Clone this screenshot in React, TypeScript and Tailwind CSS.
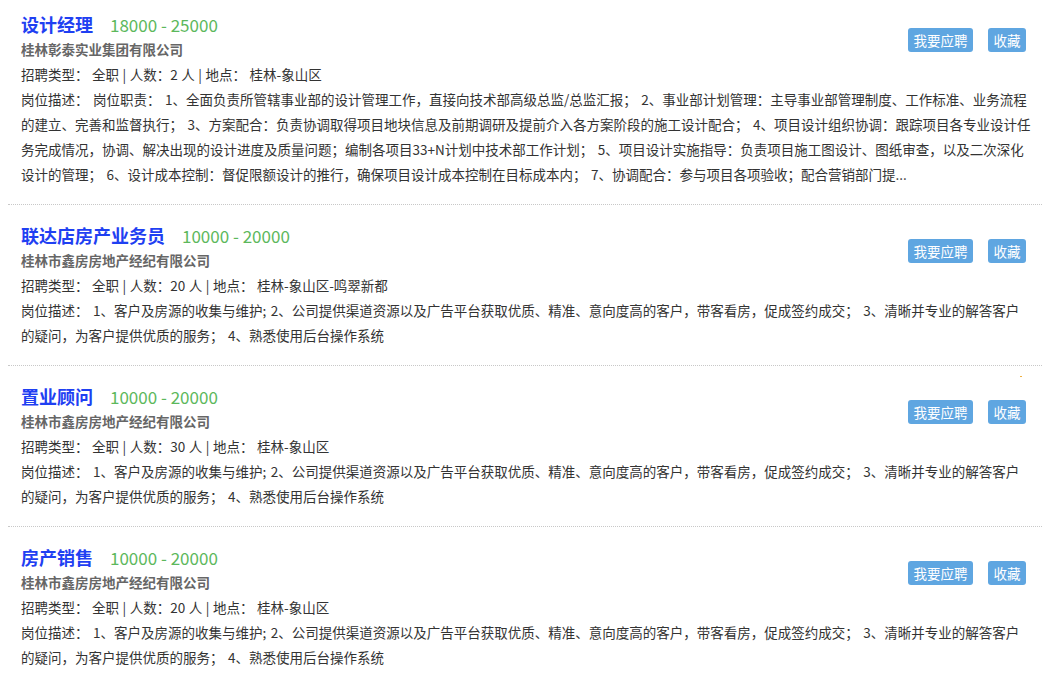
import React from "react";

type Job = {
  title: string;
  salary: string;
  company: string;
  count: string;
  place: string;
  desc: string;
};

const jobs: Job[] = [
  {
    title: "设计经理",
    salary: "18000 - 25000",
    company: "桂林彰泰实业集团有限公司",
    count: "2",
    place: "桂林-象山区",
    desc: "岗位职责： 1、全面负责所管辖事业部的设计管理工作，直接向技术部高级总监/总监汇报； 2、事业部计划管理：主导事业部管理制度、工作标准、业务流程的建立、完善和监督执行； 3、方案配合：负责协调取得项目地块信息及前期调研及提前介入各方案阶段的施工设计配合； 4、项目设计组织协调：跟踪项目各专业设计任务完成情况，协调、解决出现的设计进度及质量问题；编制各项目33+N计划中技术部工作计划； 5、项目设计实施指导：负责项目施工图设计、图纸审查，以及二次深化设计的管理； 6、设计成本控制：督促限额设计的推行，确保项目设计成本控制在目标成本内； 7、协调配合：参与项目各项验收；配合营销部门提...",
  },
  {
    title: "联达店房产业务员",
    salary: "10000 - 20000",
    company: "桂林市鑫房房地产经纪有限公司",
    count: "20",
    place: "桂林-象山区-鸣翠新都",
    desc: "1、客户及房源的收集与维护; 2、公司提供渠道资源以及广告平台获取优质、精准、意向度高的客户，带客看房，促成签约成交； 3、清晰并专业的解答客户的疑问，为客户提供优质的服务； 4、熟悉使用后台操作系统",
  },
  {
    title: "置业顾问",
    salary: "10000 - 20000",
    company: "桂林市鑫房房地产经纪有限公司",
    count: "30",
    place: "桂林-象山区",
    desc: "1、客户及房源的收集与维护; 2、公司提供渠道资源以及广告平台获取优质、精准、意向度高的客户，带客看房，促成签约成交； 3、清晰并专业的解答客户的疑问，为客户提供优质的服务； 4、熟悉使用后台操作系统",
  },
  {
    title: "房产销售",
    salary: "10000 - 20000",
    company: "桂林市鑫房房地产经纪有限公司",
    count: "20",
    place: "桂林-象山区",
    desc: "1、客户及房源的收集与维护; 2、公司提供渠道资源以及广告平台获取优质、精准、意向度高的客户，带客看房，促成签约成交； 3、清晰并专业的解答客户的疑问，为客户提供优质的服务； 4、熟悉使用后台操作系统",
  },
];

function JobItem({ job }: { job: Job }) {
  return (
    <div className="border-b border-dotted border-[#c8c8c8] pl-[13px] pr-[11px] pt-[18px] pb-[17px] [word-spacing:1.5px] first:pt-[12px] last:border-b-0">
      <div className="flex items-start justify-between">
        <div>
          <div className="flex h-[25px] items-baseline leading-[25px]">
            <span className="text-[18px] font-bold text-[#1f40f2]">{job.title}</span>
            <span className="ml-[17px] text-[17px] text-[#5cb85c] [word-spacing:0px]">{job.salary}</span>
          </div>
          <div className="text-[13.5px] font-bold leading-[25px] text-[#666]">{job.company}</div>
          <div className="text-[13.5px] leading-[25px] text-[#333] [word-spacing:0.5px]">
            招聘类型： 全职 | 人数：{job.count} 人 | 地点： {job.place}
          </div>
        </div>
        <div className="mr-[5px] mt-[16px] flex gap-[15px] [word-spacing:0px]">
          <button className="h-[24px] rounded-[3px] bg-[#5fa6e1] px-[5.5px] text-[13.5px] leading-[24px] text-white">
            我要应聘
          </button>
          <button className="h-[24px] rounded-[3px] bg-[#5fa6e1] px-[5.5px] text-[13.5px] leading-[24px] text-white">
            收藏
          </button>
        </div>
      </div>
      <div className="text-[13.5px] leading-[25px] text-[#333]">
        岗位描述： {job.desc}
      </div>
    </div>
  );
}

export default function App() {
  return (
    <div
      className="min-h-[673px] bg-white"
      style={{ fontFamily: '"Noto Sans CJK SC", "Noto Sans", sans-serif' }}
    >
      <div className="relative ml-[8px] mr-[9px]">
        {jobs.map((j) => (
          <JobItem key={j.title} job={j} />
        ))}
        <span className="absolute left-[1012px] top-[376px] h-[1px] w-[2px] bg-[#f0b040]" />
      </div>
    </div>
  );
}
